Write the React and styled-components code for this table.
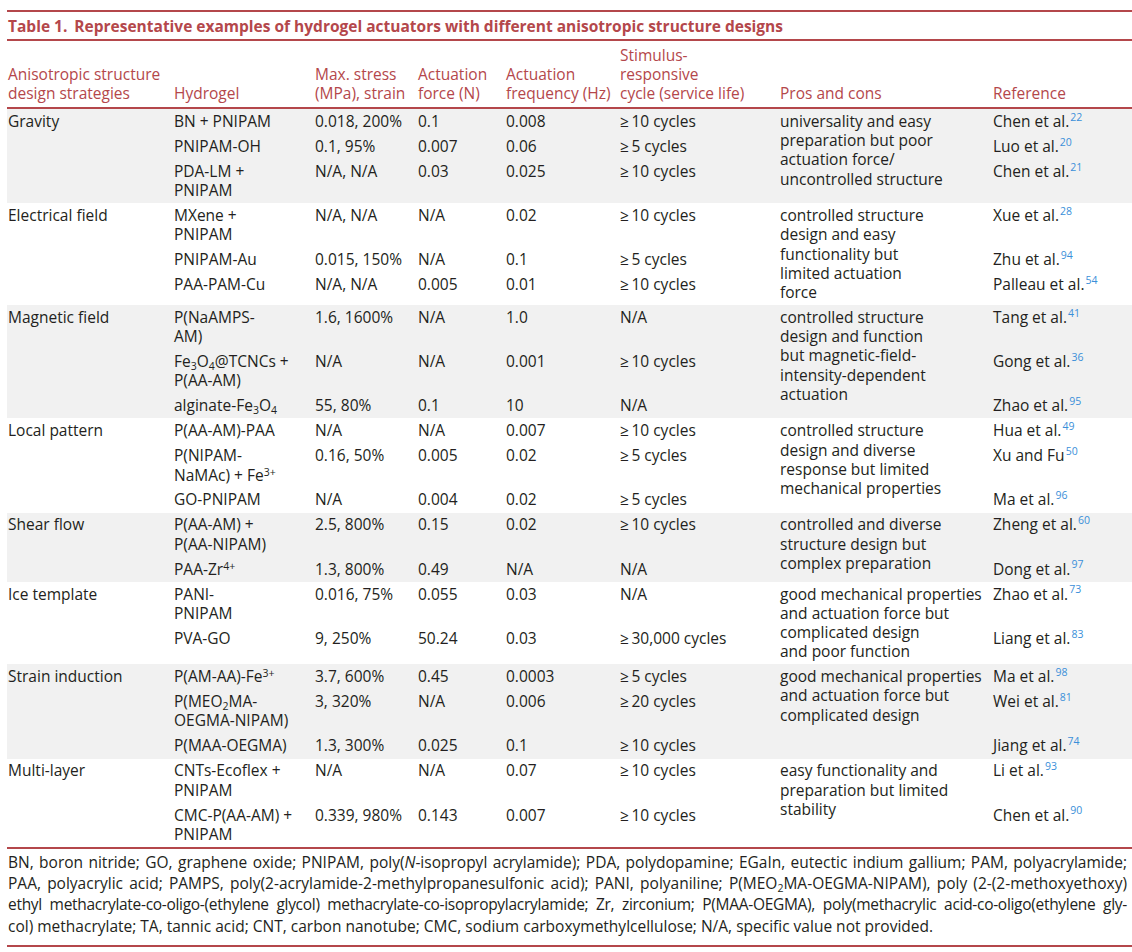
import React from 'react';
import styled, { createGlobalStyle } from 'styled-components';

const red = '#b4474b';
const blue = '#3a8fd9';
const ink = '#231f20';
const shade = '#f1f1f1';
const cols = '166px 141px 103px 88px 114px 160px 213px 1fr';

const GlobalStyle = createGlobalStyle`
  html, body {
    margin: 0;
    padding: 0;
    background: #fff;
  }
  body {
    font-family: 'Open Sans', 'Liberation Sans', sans-serif;
    font-size: 15.5px;
    color: ${ink};
  }
`;

const Page = styled.div`
  padding: 10px 0 0 7px;
  width: 1132px;
  box-sizing: border-box;
`;

const Caption = styled.div`
  border-top: 2px solid ${red};
  border-bottom: 2px solid ${red};
  padding: 5px 1px 3px;
  line-height: 19px;
  color: ${red};
  font-weight: 700;
  white-space: nowrap;
  span {
    margin-right: 7px;
  }
`;

const HeadRow = styled.div`
  display: grid;
  grid-template-columns: ${cols};
  align-items: end;
  padding: 5px 0 3.5px;
  border-bottom: 2px solid ${red};
  color: ${red};
  line-height: 19.2px;
`;

const HeadCell = styled.div`
  padding: 0 1px;
  white-space: nowrap;
`;

const Group = styled.div`
  display: grid;
  grid-template-columns: ${cols};
  grid-template-rows: ${(p) => `repeat(${p.$rows - 1}, auto) 1fr`};
  background: ${(p) => (p.$shade ? shade : '#fff')};
  line-height: 19.2px;
`;

const Cell = styled.div`
  padding: 2.9px 1px;
  white-space: nowrap;
`;

const SpanCell = styled(Cell)`
  grid-column: ${(p) => p.$col};
  grid-row: 1 / -1;
`;

const Ref = styled.sup`
  color: ${blue};
  font-size: 10.5px;
  line-height: 0;
  vertical-align: 0.6em;
  margin-left: 1px;
`;

const Up = styled.sup`
  font-size: 10.5px;
  line-height: 0;
  vertical-align: 0.5em;
`;

const Down = styled.sub`
  font-size: 10.5px;
  line-height: 0;
  vertical-align: -0.25em;
`;

const Notes = styled.div`
  border-top: 2px solid ${red};
  border-bottom: 2px solid ${red};
  padding: 3px 5px 8px 1px;
  line-height: 21.3px;
`;

const NoteLine = styled.div`
  white-space: nowrap;
  text-align: ${(p) => (p.$last ? 'left' : 'justify')};
  text-align-last: ${(p) => (p.$last ? 'left' : 'justify')};
  letter-spacing: ${(p) => p.$tight || 0}px;
`;

const ge = (n) => `≥\u2009${n} cycles`;

const groups = [
  {
    name: 'Gravity',
    shade: true,
    pros: ['universality and easy', 'preparation but poor', 'actuation force/', 'uncontrolled structure'],
    rows: [
      ['BN + PNIPAM', '0.018, 200%', '0.1', '0.008', ge(10), 'Chen et al.', 22],
      ['PNIPAM-OH', '0.1, 95%', '0.007', '0.06', ge(5), 'Luo et al.', 20],
      [<>PDA-LM +<br />PNIPAM</>, 'N/A, N/A', '0.03', '0.025', ge(10), 'Chen et al.', 21],
    ],
  },
  {
    name: 'Electrical field',
    pros: ['controlled structure', 'design and easy', 'functionality but', 'limited actuation', 'force'],
    rows: [
      [<>MXene +<br />PNIPAM</>, 'N/A, N/A', 'N/A', '0.02', ge(10), 'Xue et al.', 28],
      ['PNIPAM-Au', '0.015, 150%', 'N/A', '0.1', ge(5), 'Zhu et al.', 94],
      ['PAA-PAM-Cu', 'N/A, N/A', '0.005', '0.01', ge(10), 'Palleau et al.', 54],
    ],
  },
  {
    name: 'Magnetic field',
    shade: true,
    pros: ['controlled structure', 'design and function', 'but magnetic-field-', 'intensity-dependent', 'actuation'],
    rows: [
      [<>P(NaAMPS-<br />AM)</>, '1.6, 1600%', 'N/A', '1.0', 'N/A', 'Tang et al.', 41],
      [
        <>Fe<Down>3</Down>O<Down>4</Down>@TCNCs +<br />P(AA-AM)</>,
        'N/A', 'N/A', '0.001', ge(10), 'Gong et al.', 36,
      ],
      [<>alginate-Fe<Down>3</Down>O<Down>4</Down></>, '55, 80%', '0.1', '10', 'N/A', 'Zhao et al.', 95],
    ],
  },
  {
    name: 'Local pattern',
    pros: ['controlled structure', 'design and diverse', 'response but limited', 'mechanical properties'],
    rows: [
      ['P(AA-AM)-PAA', 'N/A', 'N/A', '0.007', ge(10), 'Hua et al.', 49],
      [<>P(NIPAM-<br />NaMAc) + Fe<Up>3+</Up></>, '0.16, 50%', '0.005', '0.02', ge(5), 'Xu and Fu', 50],
      ['GO-PNIPAM', 'N/A', '0.004', '0.02', ge(5), 'Ma et al.', 96],
    ],
  },
  {
    name: 'Shear flow',
    shade: true,
    pros: ['controlled and diverse', 'structure design but', 'complex preparation'],
    rows: [
      [<>P(AA-AM) +<br />P(AA-NIPAM)</>, '2.5, 800%', '0.15', '0.02', ge(10), 'Zheng et al.', 60],
      [<>PAA-Zr<Up>4+</Up></>, '1.3, 800%', '0.49', 'N/A', 'N/A', 'Dong et al.', 97],
    ],
  },
  {
    name: 'Ice template',
    pros: ['good mechanical properties', 'and actuation force but', 'complicated design', 'and poor function'],
    rows: [
      [<>PANI-<br />PNIPAM</>, '0.016, 75%', '0.055', '0.03', 'N/A', 'Zhao et al.', 73],
      ['PVA-GO', '9, 250%', '50.24', '0.03', ge('30,000'), 'Liang et al.', 83],
    ],
  },
  {
    name: 'Strain induction',
    shade: true,
    pros: ['good mechanical properties', 'and actuation force but', 'complicated design'],
    rows: [
      [<>P(AM-AA)-Fe<Up>3+</Up></>, '3.7, 600%', '0.45', '0.0003', ge(5), 'Ma et al.', 98],
      [<>P(MEO<Down>2</Down>MA-<br />OEGMA-NIPAM)</>, '3, 320%', 'N/A', '0.006', ge(20), 'Wei et al.', 81],
      ['P(MAA-OEGMA)', '1.3, 300%', '0.025', '0.1', ge(10), 'Jiang et al.', 74],
    ],
  },
  {
    name: 'Multi-layer',
    pros: ['easy functionality and', 'preparation but limited', 'stability'],
    rows: [
      [<>CNTs-Ecoflex +<br />PNIPAM</>, 'N/A', 'N/A', '0.07', ge(10), 'Li et al.', 93],
      [<>CMC-P(AA-AM) +<br />PNIPAM</>, '0.339, 980%', '0.143', '0.007', ge(10), 'Chen et al.', 90],
    ],
  },
];

const heads = [
  <>Anisotropic structure<br />design strategies</>,
  'Hydrogel',
  <>Max. stress<br />(MPa), strain</>,
  <>Actuation<br />force (N)</>,
  <>Actuation<br />frequency (Hz)</>,
  <>Stimulus-<br />responsive<br />cycle (service life)</>,
  'Pros and cons',
  'Reference',
];

const Lines = ({ lines }) =>
  lines.map((l, i) => (
    <React.Fragment key={i}>
      {i > 0 && <br />}
      {l}
    </React.Fragment>
  ));

const App = () => {
  return (
    <Page>
      <GlobalStyle />
      <Caption>
        <span>Table 1.</span>Representative examples of hydrogel actuators with different anisotropic structure designs
      </Caption>
      <HeadRow>
        {heads.map((h, i) => (
          <HeadCell key={i}>{h}</HeadCell>
        ))}
      </HeadRow>
      {groups.map((g) => (
        <Group key={g.name} $rows={g.rows.length} $shade={g.shade}>
          <SpanCell $col={1}>{g.name}</SpanCell>
          <SpanCell $col={7}>
            <Lines lines={g.pros} />
          </SpanCell>
          {g.rows.map((r, i) => (
            <React.Fragment key={i}>
              <Cell>{r[0]}</Cell>
              <Cell>{r[1]}</Cell>
              <Cell>{r[2]}</Cell>
              <Cell>{r[3]}</Cell>
              <Cell>{r[4]}</Cell>
              <Cell>
                {r[5]}
                <Ref>{r[6]}</Ref>
              </Cell>
            </React.Fragment>
          ))}
        </Group>
      ))}
      <Notes>
        <NoteLine>
          BN, boron nitride; GO, graphene oxide; PNIPAM, poly(<i>N</i>-isopropyl acrylamide); PDA, polydopamine; EGaIn, eutectic indium gallium; PAM, polyacrylamide;
        </NoteLine>
        <NoteLine>
          PAA, polyacrylic acid; PAMPS, poly(2-acrylamide-2-methylpropanesulfonic acid); PANI, polyaniline; P(MEO<Down>2</Down>MA-OEGMA-NIPAM), poly (2-(2-methoxyethoxy)
        </NoteLine>
        <NoteLine $tight={-0.3}>
          ethyl methacrylate-co-oligo-(ethylene glycol) methacrylate-co-isopropylacrylamide; Zr, zirconium; P(MAA-OEGMA), poly(methacrylic acid-co-oligo(ethylene gly-
        </NoteLine>
        <NoteLine $last>
          col) methacrylate; TA, tannic acid; CNT, carbon nanotube; CMC, sodium carboxymethylcellulose; N/A, specific value not provided.
        </NoteLine>
      </Notes>
    </Page>
  );
};

export default App;
